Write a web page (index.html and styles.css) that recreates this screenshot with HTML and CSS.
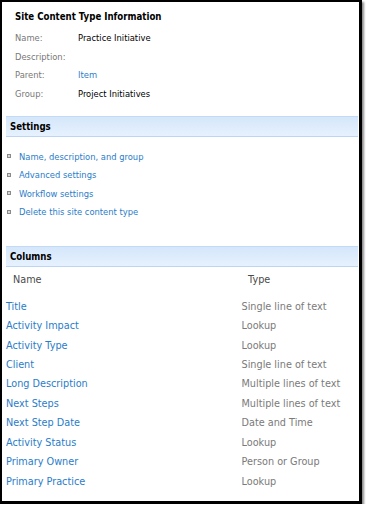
FILE: index.html
```html
<!DOCTYPE html>
<html lang="en">
<head>
    <meta charset="UTF-8">
    <title>Site Content Type - Practice Initiative</title>
    <link rel="stylesheet" href="styles.css">
</head>
<body>

    <div class="frame">

        <!-- Content type summary -->
        <div class="info">
            <h2 class="info-title">Site Content Type Information</h2>
            <div class="info-row">
                <span class="info-label">Name:</span>
                <span class="info-value">Practice Initiative</span>
            </div>
            <div class="info-row">
                <span class="info-label">Description:</span>
                <span class="info-value"></span>
            </div>
            <div class="info-row">
                <span class="info-label">Parent:</span>
                <a class="info-value link" href="#">Item</a>
            </div>
            <div class="info-row">
                <span class="info-label">Group:</span>
                <span class="info-value">Project Initiatives</span>
            </div>
        </div>

        <!-- Settings -->
        <div class="section-bar settings-bar">Settings</div>
        <ul class="settings-list">
            <li><a class="link" href="#">Name, description, and group</a></li>
            <li><a class="link" href="#">Advanced settings</a></li>
            <li><a class="link" href="#">Workflow settings</a></li>
            <li><a class="link" href="#">Delete this site content type</a></li>
        </ul>

        <!-- Columns -->
        <div class="section-bar columns-bar">Columns</div>
        <div class="columns-head">
            <span>Name</span>
            <span>Type</span>
        </div>
        <div class="columns">
            <a class="link" href="#">Title</a><span class="col-type">Single line of text</span>
            <a class="link" href="#">Activity Impact</a><span class="col-type">Lookup</span>
            <a class="link" href="#">Activity Type</a><span class="col-type">Lookup</span>
            <a class="link" href="#">Client</a><span class="col-type">Single line of text</span>
            <a class="link" href="#">Long Description</a><span class="col-type">Multiple lines of text</span>
            <a class="link" href="#">Next Steps</a><span class="col-type">Multiple lines of text</span>
            <a class="link" href="#">Next Step Date</a><span class="col-type">Date and Time</span>
            <a class="link" href="#">Activity Status</a><span class="col-type">Lookup</span>
            <a class="link" href="#">Primary Owner</a><span class="col-type">Person or Group</span>
            <a class="link" href="#">Primary Practice</a><span class="col-type">Lookup</span>
        </div>

    </div>

</body>
</html>
```

FILE: styles.css
```css
/* Page */
body {
    margin: 0;
    background: #fff;
    font-family: 'DejaVu Sans Condensed', 'DejaVu Sans', sans-serif;
    font-size: 9.3px;
    color: #000;
}

/* Screenshot frame with its drop shadow */
.frame {
    box-sizing: border-box;
    width: 362px;
    height: 504px;
    border-top: 2px solid #000;
    border-left: 2px solid #000;
    border-right: 3px solid #000;
    border-bottom: 3px solid #000;
    box-shadow: 2px 2px 2px rgba(0, 0, 0, 0.45);
    padding: 5px 0 0 4px;
    overflow: hidden;
}

.link {
    color: #2a7cc9;
    text-decoration: none;
}

/* Content type information */
.info {
    padding-left: 9px;
}

.info-title {
    margin: 0;
    font-size: 9.6px;
    font-weight: bold;
    line-height: 19px;
}

.info-row {
    display: flex;
    height: 18.7px;
    align-items: center;
}

.info-row:first-of-type {
    margin-top: 2px;
}

.info-label {
    width: 63px;
    color: #777;
}

/* Section bars */
.section-bar {
    box-sizing: border-box;
    height: 21px;
    margin-right: 1px;
    padding-left: 4px;
    line-height: 19px;
    font-size: 9.6px;
    font-weight: bold;
    border-top: 1px solid #c2daf6;
    border-bottom: 1px solid #bcd5f4;
    background: linear-gradient(#d5e7fb, #e6f1fd);
}

.settings-bar {
    margin-top: 13px;
}

.settings-list {
    list-style: none;
    margin: 10px 0 0;
    padding: 0;
}

.settings-list li {
    display: flex;
    align-items: center;
    height: 18.6px;
}

.settings-list li::before {
    content: "";
    box-sizing: border-box;
    width: 4px;
    height: 4px;
    margin: 0 8px 0 1px;
    border: 1px solid #8a8a8a;
    background: #d8d8d8;
}

.columns-bar {
    margin-top: 25px;
}

/* Columns table */
.columns-head,
.columns {
    display: grid;
    grid-template-columns: 235.5px 1fr;
    font-family: 'DejaVu Sans', sans-serif;
    font-size: 9.7px;
}

.columns-head {
    margin-top: 3px;
    padding-left: 7px;
    grid-template-columns: 235px 1fr;
    line-height: 19.5px;
    color: #4a4a4a;
}

.columns {
    margin-top: 7px;
    line-height: 19.45px;
}

.col-type {
    color: #7a7a7a;
}
```
